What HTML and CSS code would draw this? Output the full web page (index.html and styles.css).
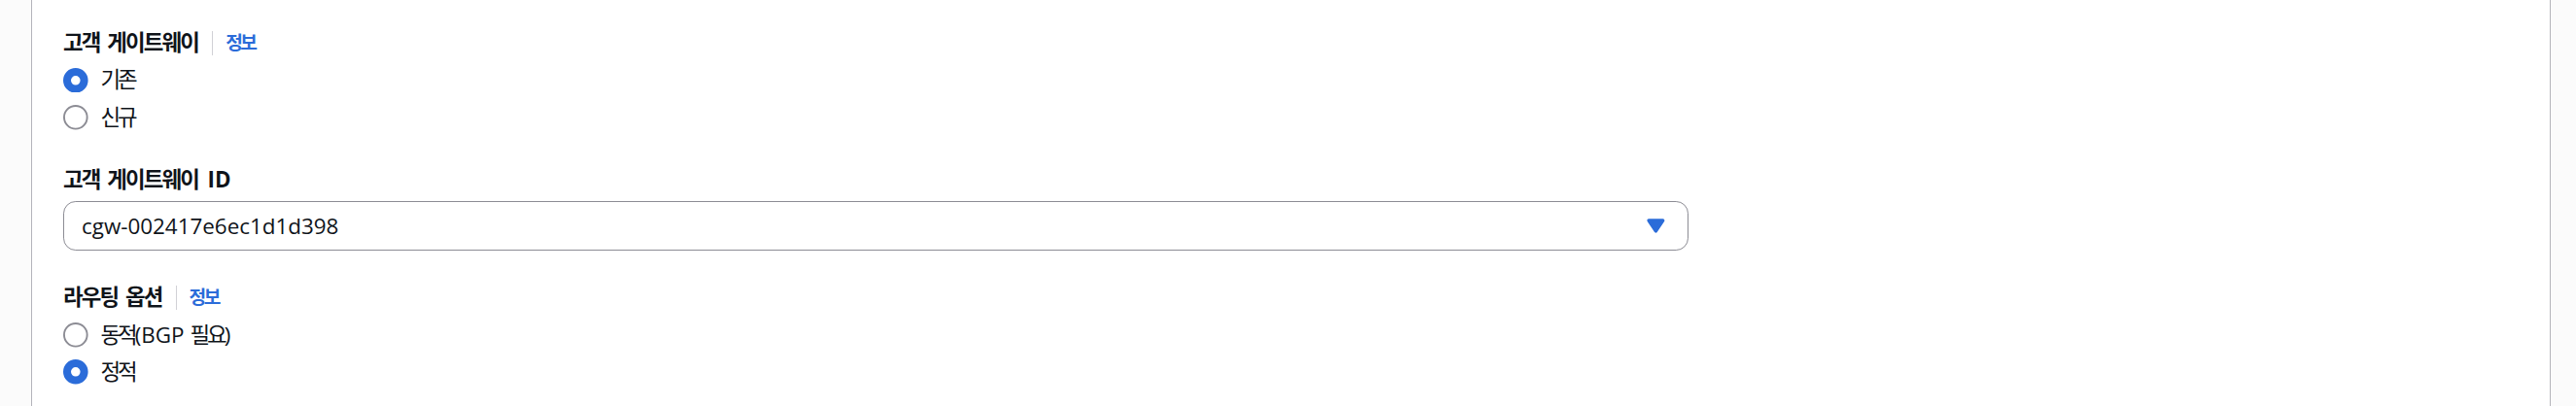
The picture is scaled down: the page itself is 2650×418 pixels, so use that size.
FILE: index.html
```html
<!DOCTYPE html>
<html lang="ko">
<head>
<meta charset="utf-8">
<title>VPN</title>
<link rel="stylesheet" href="styles.css">
</head>
<body>
<div class="page">
  <div class="card">
    <div class="form">
      <div class="field">
        <div class="label-row">
          <span class="label ko">고객 게이트웨이</span>
          <span class="sep"></span>
          <a class="info ko" href="#">정보</a>
        </div>
        <div class="radios">
          <label class="radio">
            <svg viewBox="0 0 16 16" class="rb"><circle cx="8" cy="8" r="5.5" fill="#fff" stroke="#2b6cd9" stroke-width="5"/></svg>
            <span class="ko">기존</span>
          </label>
          <label class="radio">
            <svg viewBox="0 0 16 16" class="rb"><circle cx="8" cy="8" r="7.4" fill="#fff" stroke="#8c8c94" stroke-width="1.2"/></svg>
            <span class="ko">신규</span>
          </label>
        </div>
      </div>

      <div class="field">
        <div class="label-row">
          <span class="label"><span class="ko">고객 게이트웨이</span> ID</span>
        </div>
        <div class="select">
          <span class="value">cgw-002417e6ec1d1d398</span>
          <svg viewBox="0 0 16 16" class="caret"><path d="M4 5h8l-4 6-4-6z" fill="#2b6cd9" stroke="#2b6cd9" stroke-width="2" stroke-linejoin="round"/></svg>
        </div>
      </div>

      <div class="field">
        <div class="label-row">
          <span class="label ko">라우팅 옵션</span>
          <span class="sep"></span>
          <a class="info ko" href="#">정보</a>
        </div>
        <div class="radios">
          <label class="radio">
            <svg viewBox="0 0 16 16" class="rb"><circle cx="8" cy="8" r="7.4" fill="#fff" stroke="#8c8c94" stroke-width="1.2"/></svg>
            <span><span class="ko">동적</span>(BGP <span class="ko">필요</span>)</span>
          </label>
          <label class="radio">
            <svg viewBox="0 0 16 16" class="rb"><circle cx="8" cy="8" r="5.5" fill="#fff" stroke="#2b6cd9" stroke-width="5"/></svg>
            <span class="ko">정적</span>
          </label>
        </div>
      </div>
    </div>
  </div>
</div>
</body>
</html>
```

FILE: styles.css
```css
html, body {
  margin: 0;
  padding: 0;
  height: 100%;
}

body {
  background: #fbfbfb;
  font-family: "Open Sans", "Noto Sans CJK KR", sans-serif;
  color: #0f141a;
  overflow: hidden;
}

.page {
  display: flex;
  height: 418px;
  padding: 0 26px 0 32px;
  box-sizing: border-box;
}

.card {
  flex: 1;
  background: #ffffff;
  border-left: 1px solid #b4b4bb;
  border-right: 1px solid #b4b4bb;
  padding: 28px 32px 0 32px;
}

.form {
  display: flex;
  flex-direction: column;
  gap: 32px;
}

.field {
  display: flex;
  flex-direction: column;
  gap: 6.4px;
}

.ko {
  letter-spacing: -0.13em;
}

.label-row {
  display: flex;
  align-items: center;
  height: 32px;
  font-size: 22.4px;
  line-height: 32px;
  font-weight: 700;
}

.label,
.label .ko {
  letter-spacing: -0.08em;
  word-spacing: 3.5px;
}

.label {
  letter-spacing: 0;
}

.label.ko {
  letter-spacing: -0.08em;
}

.sep {
  width: 1px;
  height: 25px;
  background: #d1d1d6;
  margin: 0 13px 0 14px;
}

.info {
  font-size: 19.2px;
  font-weight: 700;
  color: #2b6cd9;
  text-decoration: none;
}

.radios {
  display: flex;
  flex-direction: column;
  gap: 6.4px;
}

.radio {
  display: flex;
  align-items: center;
  gap: 12.8px;
  height: 32px;
  font-size: 22.4px;
  line-height: 32px;
}

.rb {
  width: 25.6px;
  height: 25.6px;
  flex: none;
}

.select {
  width: 1672px;
  height: 51.2px;
  box-sizing: border-box;
  border: 1.5px solid #8c8c94;
  border-radius: 12.8px;
  display: flex;
  align-items: center;
  justify-content: space-between;
  padding: 0 18px 0 18px;
  font-size: 22.4px;
  line-height: 32px;
}

.caret {
  width: 28.8px;
  height: 28.8px;
  flex: none;
}
```
